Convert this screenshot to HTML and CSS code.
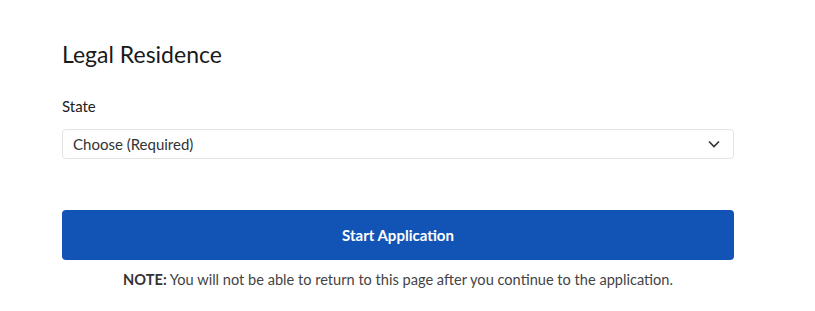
FILE: index.html
```html
<!DOCTYPE html>
<html>
<head>
<meta charset="utf-8">
<link rel="stylesheet" href="styles.css">
</head>
<body>
<div class="page">
  <h1 class="title">Legal Residence</h1>
  <label class="label">State</label>
  <div class="select">
    <span class="select-text">Choose (Required)</span>
    <svg class="chev" width="12" height="8" viewBox="0 0 12 8"><path d="M1 1.5 L6 6.5 L11 1.5" fill="none" stroke="#333" stroke-width="1.6"/></svg>
  </div>
  <button class="btn">Start Application</button>
  <p class="note"><b>NOTE:</b> You will not be able to return to this page after you continue to the application.</p>
</div>
</body>
</html>
```
FILE: styles.css
```css
html, body { margin: 0; padding: 0; background: #fff; }
body { font-family: Lato, "Open Sans", sans-serif; color: #222; }
.page { width: 672px; margin-left: 62px; padding-top: 41px; display: flex; flex-direction: column; }
.title { font-size: 23px; font-weight: 400; margin: 0; line-height: 26px; color: #1a1a1a; }
.label { font-size: 15px; margin-top: 30px; line-height: 18px; color: #222; }
.select { margin-top: 14px; height: 30px; border: 1px solid #e3e3e3; border-radius: 4px; display: flex; align-items: center; justify-content: space-between; padding: 0 13px 0 10px; box-sizing: border-box; }
.select-text { font-size: 15px; color: #333; }
.btn { margin-top: 51px; height: 50px; border: none; border-radius: 4px; background: #1254b5; color: #fff; font-family: inherit; font-size: 15px; font-weight: 700; }
.note { margin: 10px 0 0; text-align: center; font-size: 14.6px; color: #444; line-height: 20px; }
.note b { color: #333; }
```
